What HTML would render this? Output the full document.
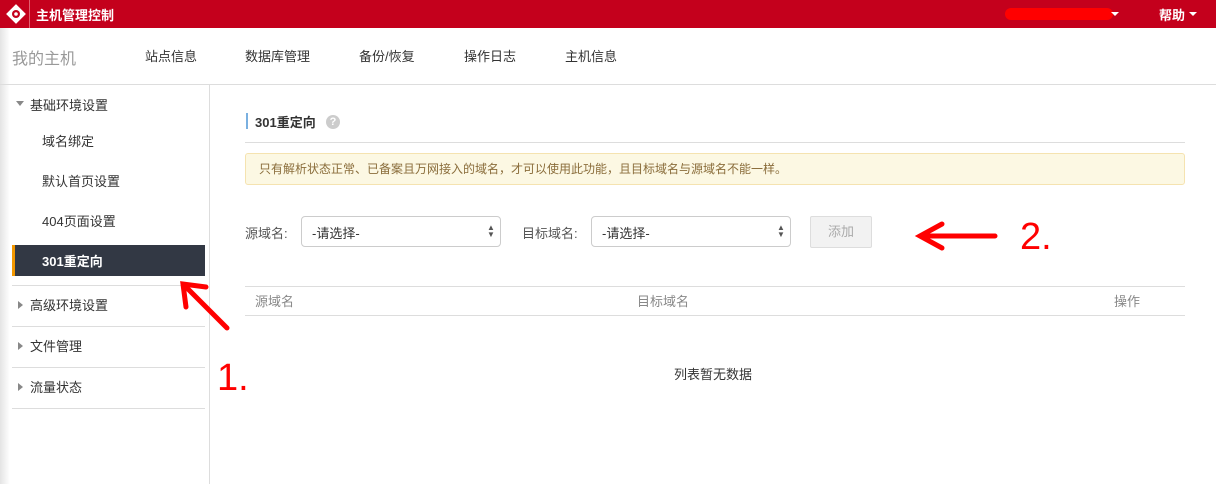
<!DOCTYPE html>
<html><head><meta charset="utf-8">
<style>
*{margin:0;padding:0;box-sizing:border-box}
body{width:1216px;height:484px;overflow:hidden;background:#fff;font-family:"Liberation Sans","Noto Sans CJK SC",sans-serif;position:relative;color:#333;font-size:13px}
.a{position:absolute;white-space:nowrap}
.top{position:absolute;left:0;top:0;width:1216px;height:28px;background:#c4001c}
.shadow{position:absolute;left:0;top:28px;width:10px;height:456px;background:linear-gradient(to right,#e4e4e4,#fff)}
.sep{position:absolute;left:12px;width:193px;height:1px;background:#ddd}
.tri{position:absolute;width:0;height:0}
.sel{position:absolute;top:216px;height:31px;border:1px solid #ccc;border-radius:4px;background:#fff;font-size:13px;padding:6px 10px;color:#333}
</style></head><body>
<div class="top"></div>
<svg class="a" style="left:6px;top:4px" width="20" height="20" viewBox="0 0 20 20"><rect x="3" y="3" width="14" height="14" transform="rotate(45 10 10)" fill="#fff"/><circle cx="10" cy="10" r="4" fill="#c4001c"/><circle cx="10" cy="10" r="1.8" fill="#fff"/></svg>
<div class="a" style="left:29px;top:0;width:1px;height:28px;background:#e26070"></div>
<div class="a" style="left:36px;top:5px;color:#fff;font-size:13px;font-weight:bold">主机管理控制</div>
<div class="a" style="left:1005px;top:8px;width:108px;height:12px;background:#f00;border-radius:6px"></div>
<div class="tri" style="left:1111px;top:12px;border:4px solid transparent;border-top:4px solid #fff"></div>
<div class="a" style="left:1159px;top:5px;color:#fff;font-size:13px;font-weight:bold">帮助</div>
<div class="tri" style="left:1189px;top:12px;border:4px solid transparent;border-top:4px solid #fff"></div>
<div class="shadow"></div>
<div class="a" style="left:12px;top:45px;font-size:16px;color:#999">我的主机</div>
<div class="a" style="left:145px;top:46px">站点信息</div>
<div class="a" style="left:245px;top:46px">数据库管理</div>
<div class="a" style="left:359px;top:46px">备份/恢复</div>
<div class="a" style="left:464px;top:46px">操作日志</div>
<div class="a" style="left:565px;top:46px">主机信息</div>
<div class="a" style="left:0;top:84px;width:1216px;height:1px;background:#ddd"></div>
<div class="a" style="left:209px;top:85px;width:1px;height:399px;background:#ddd"></div>
<div class="tri" style="left:16px;top:101px;border:4px solid transparent;border-top:5px solid #888"></div>
<div class="a" style="left:30px;top:95px">基础环境设置</div>
<div class="a" style="left:42px;top:131px">域名绑定</div>
<div class="a" style="left:42px;top:171px">默认首页设置</div>
<div class="a" style="left:42px;top:211px">404页面设置</div>
<div class="a" style="left:12px;top:245px;width:193px;height:31px;background:#323844;border-left:3px solid #f39800"></div>
<div class="a" style="left:42px;top:251px;color:#fff;font-weight:bold">301重定向</div>
<div class="sep" style="top:285px"></div>
<div class="sep" style="top:326px"></div>
<div class="sep" style="top:367px"></div>
<div class="sep" style="top:408px"></div>
<div class="tri" style="left:18px;top:301px;border:4px solid transparent;border-left:5px solid #888"></div>
<div class="a" style="left:30px;top:295px">高级环境设置</div>
<div class="tri" style="left:18px;top:342px;border:4px solid transparent;border-left:5px solid #888"></div>
<div class="a" style="left:30px;top:336px">文件管理</div>
<div class="tri" style="left:18px;top:383px;border:4px solid transparent;border-left:5px solid #888"></div>
<div class="a" style="left:30px;top:377px">流量状态</div>

<div class="a" style="left:246px;top:113px;width:2px;height:16px;background:#7ab0e0"></div>
<div class="a" style="left:255px;top:112px;font-weight:bold">301重定向</div>
<div class="a" style="left:326px;top:115px;width:14px;height:14px;border-radius:7px;background:#ccc;color:#fff;font-size:11px;text-align:center;line-height:14px;font-weight:bold">?</div>
<div class="a" style="left:245px;top:142px;width:940px;height:1px;background:#ddd"></div>
<div class="a" style="left:245px;top:153px;width:940px;height:32px;background:#fcf8e3;border:1px solid #f5e3b0;border-radius:3px"></div>
<div class="a" style="left:259px;top:160px;font-size:12px;color:#8a6d3b">只有解析状态正常、已备案且万网接入的域名，才可以使用此功能，且目标域名与源域名不能一样。</div>
<div class="a" style="left:245px;top:223px;color:#555">源域名:</div>
<div class="sel" style="left:301px;width:200px">-请选择-</div>
<div class="a" style="left:487px;top:224px;font-size:8px;line-height:7px;color:#555">▲<br>▼</div>
<div class="a" style="left:522px;top:223px;color:#555">目标域名:</div>
<div class="sel" style="left:591px;width:200px">-请选择-</div>
<div class="a" style="left:777px;top:224px;font-size:8px;line-height:7px;color:#555">▲<br>▼</div>
<div class="a" style="left:810px;top:216px;width:62px;height:32px;background:#f2f2f2;border:1px solid #ddd;border-radius:2px;color:#aaa;text-align:center;line-height:30px">添加</div>
<div class="a" style="left:245px;top:286px;width:940px;height:1px;background:#ddd"></div>
<div class="a" style="left:245px;top:315px;width:940px;height:1px;background:#ddd"></div>
<div class="a" style="left:255px;top:291px;color:#888">源域名</div>
<div class="a" style="left:637px;top:291px;color:#888">目标域名</div>
<div class="a" style="left:1114px;top:291px;color:#888">操作</div>
<div class="a" style="left:674px;top:364px">列表暂无数据</div>

<svg class="a" style="left:0;top:0" width="1216" height="484">
<g stroke="#f00" stroke-width="5" stroke-linecap="round" fill="none">
<line x1="227" y1="328" x2="184" y2="285"/>
<polyline points="206,287 183,284 186,307"/>
<line x1="995" y1="236" x2="922" y2="236"/>
<polyline points="942,224 920,236 942,248"/>
</g>
<text x="217" y="390" font-family="Liberation Sans" font-size="38" fill="#f00">1.</text>
<text x="1020" y="249" font-family="Liberation Sans" font-size="38" fill="#f00">2.</text>
</svg>
</body></html>
